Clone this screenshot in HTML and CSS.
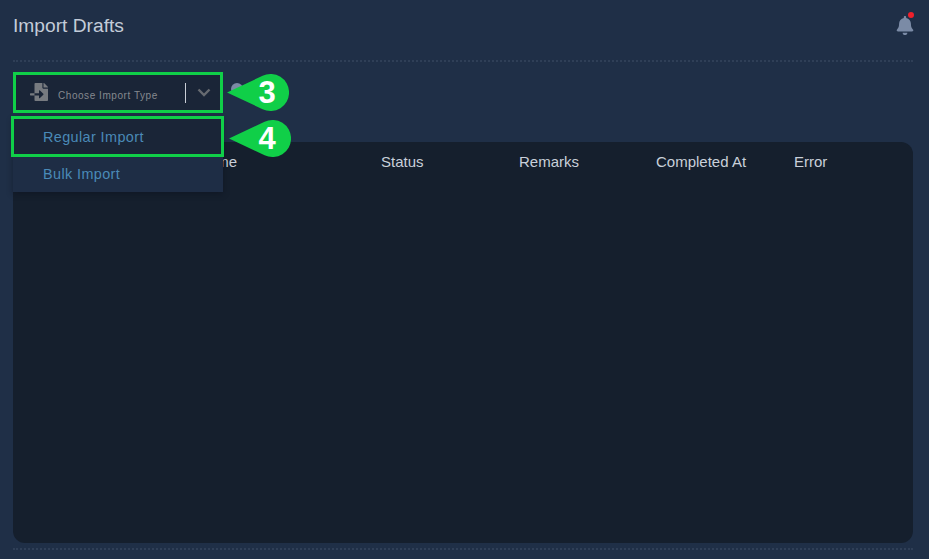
FILE: index.html
```html
<!DOCTYPE html>
<html lang="en">
<head>
<meta charset="utf-8">
<title>Import Drafts</title>
<link rel="stylesheet" href="styles.css">
</head>
<body>
<div class="page">
  <header class="topbar">
    <h1 class="title">Import Drafts</h1>
    <div class="bell">
      <svg class="bell-icon" viewBox="0 0 448 512"><path d="M224 512c35.32 0 63.97-28.65 63.97-64H160.03c0 35.35 28.65 64 63.97 64zm215.39-149.71c-19.32-20.76-55.47-51.99-55.47-154.29 0-77.7-54.48-139.9-127.94-155.16V32c0-17.67-14.32-32-31.98-32s-31.98 14.33-31.98 32v20.84C118.56 68.1 64.08 130.3 64.08 208c0 102.3-36.15 133.53-55.47 154.29-6 6.45-8.66 14.16-8.61 21.71.11 16.4 12.98 32 32.1 32h383.8c19.12 0 32-15.6 32.1-32 .05-7.55-2.61-15.27-8.61-21.71z"/></svg>
      <span class="bell-dot"></span>
    </div>
  </header>
  <div class="toolbar">
    <div class="picker">
      <svg class="file-icon" viewBox="0 0 512 512"><path d="M16 288c-8.8 0-16 7.2-16 16v32c0 8.8 7.2 16 16 16h112v-64zm489-183L407.1 7c-4.5-4.5-10.6-7-17-7H384v128h128v-6.1c0-6.3-2.5-12.4-7-16.9zm-153 31V0H152c-13.3 0-24 10.7-24 24v264h128v-65.2c0-14.3 17.3-21.4 27.4-11.3L379 308c6.6 6.7 6.6 17.4 0 24l-95.7 96.4c-10.1 10.1-27.4 3-27.4-11.3V352H128v136c0 13.3 10.7 24 24 24h336c13.3 0 24-10.7 24-24V160H376c-13.2 0-24-10.8-24-24z"/></svg>
      <span class="picker-label">Choose Import Type</span>
      <span class="picker-divider"></span>
      <svg class="chevron" viewBox="0 0 14 9"><path d="M1.5 1.5 7 7l5.5-5.5"/></svg>
    </div>
    <span class="help-dot"></span>
    <ul class="menu">
      <li class="menu-item menu-item-active">Regular Import</li>
      <li class="menu-item">Bulk Import</li>
    </ul>
    <div class="callout callout-three">
      <svg class="callout-shape" viewBox="0 0 62 37"><path d="M0 18.5 L35.6 1.8 A18.5 18.5 0 1 1 35.6 35.2 Z"/></svg>
      <span class="callout-num">3</span>
    </div>
    <div class="callout callout-four">
      <svg class="callout-shape" viewBox="0 0 62 37"><path d="M0 18.5 L35.6 1.8 A18.5 18.5 0 1 1 35.6 35.2 Z"/></svg>
      <span class="callout-num callout-num-four">4</span>
    </div>
  </div>
  <section class="card">
    <div class="table-head">
      <span>Name</span>
      <span>Status</span>
      <span>Remarks</span>
      <span>Completed At</span>
      <span>Error</span>
    </div>
  </section>
  <div class="footer-rule"></div>
</div>
</body>
</html>
```
FILE: styles.css
```css
* { box-sizing: border-box; }
html, body { margin: 0; height: 100%; }
body {
  background: #1f2f47;
  font-family: "Liberation Sans", Arial, sans-serif;
  overflow: hidden;
}
.page {
  width: 929px;
  height: 559px;
  padding: 0 16px 0 13px;
  display: flex;
  flex-direction: column;
}
.topbar {
  height: 62px;
  flex: none;
  display: flex;
  justify-content: space-between;
  align-items: flex-start;
  border-bottom: 2px dotted #2f3f57;
}
.title {
  margin: 15px 0 0;
  font-size: 19.2px;
  line-height: 22px;
  font-weight: 400;
  color: #c3ccd9;
}
.bell {
  position: relative;
  width: 18px;
  height: 18px;
  margin: 16px -1px 0 0;
}
.bell-icon { display: block; width: 18px; height: 19px; fill: #7b8ba6; }
.bell-dot {
  position: absolute;
  right: 0;
  top: -4px;
  width: 6px;
  height: 6px;
  border-radius: 50%;
  background: #f0202b;
}
.toolbar {
  position: relative;
  height: 80px;
  flex: none;
  display: flex;
  align-items: flex-start;
  padding-top: 10px;
}
.picker {
  width: 210px;
  height: 41px;
  flex: none;
  display: flex;
  align-items: center;
  padding-left: 14px;
  background: #1a2537;
  border: 3px solid #10cf48;
}
.file-icon { width: 18px; height: 18px; fill: #777b80; flex: none; margin-top: -2px; }
.picker-label {
  margin-left: 10px;
  width: 127px;
  flex: none;
  padding-top: 5px;
  font-size: 10px;
  letter-spacing: 0.55px;
  color: #85898f;
  white-space: nowrap;
}
.picker-divider { width: 1px; height: 20px; background: #c9ced6; flex: none; }
.chevron {
  width: 14px;
  height: 9px;
  margin-left: 11px;
  fill: none;
  stroke: #666a70;
  stroke-width: 2.4;
  flex: none;
}
.help-dot {
  width: 12px;
  height: 12px;
  margin: 11px 0 0 8px;
  border-radius: 50%;
  background: #7b8ba6;
  flex: none;
}
.menu {
  position: absolute;
  left: 0;
  top: 55px;
  width: 210px;
  height: 75px;
  margin: 0;
  padding: 0;
  list-style: none;
  background: #1e2d45;
  box-shadow: 0 2px 6px rgba(10, 16, 26, 0.45);
  z-index: 2;
}
.menu-item {
  height: 35px;
  padding-left: 30px;
  font-size: 14.4px;
  line-height: 35px;
  letter-spacing: 0.4px;
  color: #4a8ab8;
}
.menu-item-active {
  position: relative;
  left: -2px;
  width: 213px;
  height: 41px;
  margin-top: -1px;
  padding-left: 29px;
  line-height: 37px;
  background: #1a2537;
  border: 3px solid #10cf48;
}
.callout {
  position: absolute;
  width: 62px;
  height: 37px;
  z-index: 3;
}
.callout-three { left: 214px; top: 12px; }
.callout-four { left: 216px; top: 58px; }
.callout-shape { display: block; width: 62px; height: 37px; fill: #10cf48; }
.callout-num {
  position: absolute;
  left: 18px;
  right: 0;
  top: 0;
  text-align: center;
  font-size: 31px;
  font-weight: 700;
  line-height: 37px;
  color: #fff;
}
.callout-num-four { left: 14px; }
.card {
  flex: none;
  height: 401px;
  background: #151f2d;
  border-radius: 12px;
}
.table-head {
  display: grid;
  grid-template-columns: 184px 138px 137px 138px 1fr;
  padding: 11px 0 0 184px;
  font-size: 15px;
  line-height: 17px;
  color: #c9d0da;
  white-space: nowrap;
}
.footer-rule {
  flex: none;
  height: 2px;
  margin-top: 5px;
  border-bottom: 2px dotted #2f3f57;
}
```
